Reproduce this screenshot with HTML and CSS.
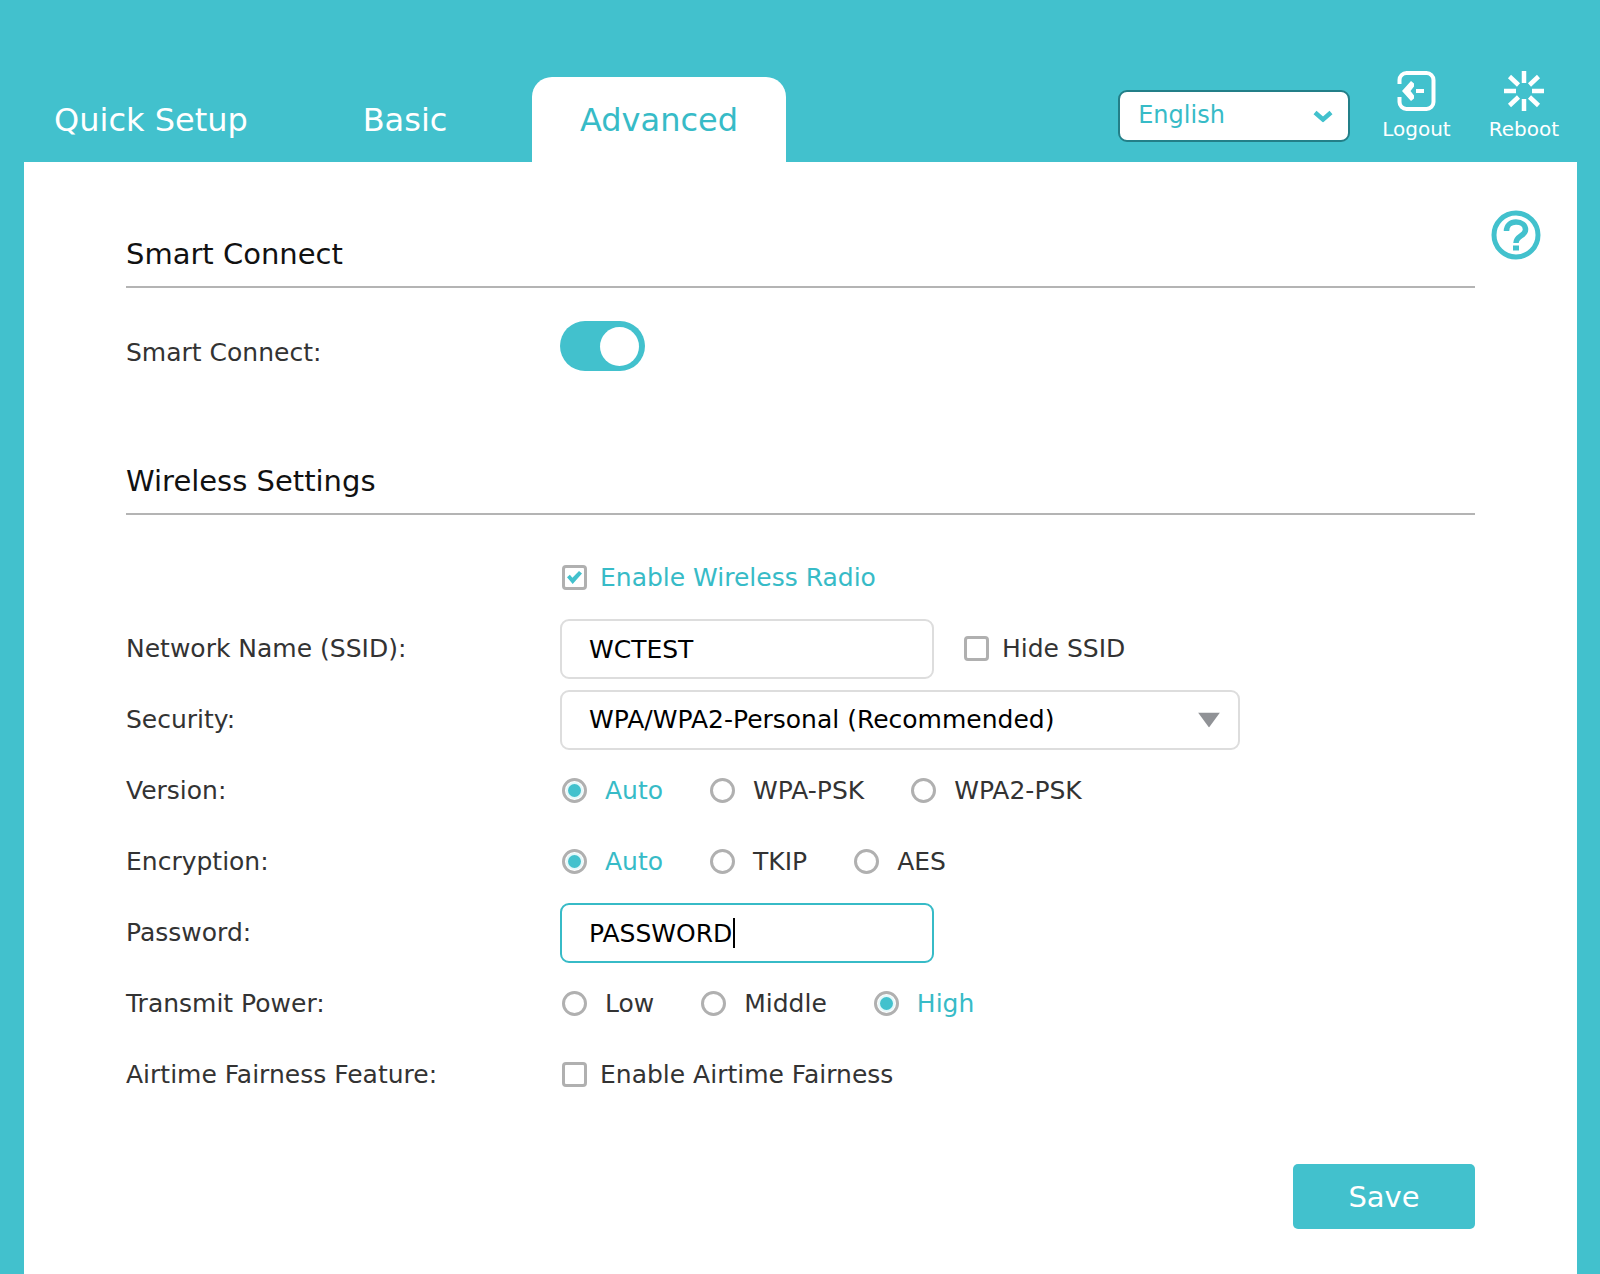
FILE: index.html
```html
<!DOCTYPE html>
<html lang="en">
<head>
  <meta charset="UTF-8" />
  <meta name="viewport" content="width=device-width, initial-scale=1.0" />
  <title>Wireless Settings</title>
  <link rel="stylesheet" href="styles.css">
</head>
<body>
  <header class="top-bar">
    <nav class="tabs">
      <a href="#quick-setup" class="tab">Quick Setup</a>
      <a href="#basic" class="tab">Basic</a>
      <a href="#advanced" class="tab active">Advanced</a>
    </nav>

    <div class="tools">
      <div class="select-wrap language">
        <select aria-label="Language">
          <option>English</option>
        </select>
        <svg class="arrow" width="20" height="13" viewBox="0 0 20 13" aria-hidden="true">
          <path d="M2 3l8 7 8-7" fill="none" stroke="currentColor" stroke-width="4.5" />
        </svg>
      </div>
      <a href="#logout" class="tool">
        <svg width="42" height="42" viewBox="0 0 42 42" aria-hidden="true">
          <g fill="none" stroke="currentColor" stroke-width="4">
            <path d="M4.500 14V10a7 7 0 0 1 7-7h20a7 7 0 0 1 7 7v22a7 7 0 0 1-7 7h-20a7 7 0 0 1-7-7v-5" />
            <path d="M21 21h8" />
          </g>
          <path d="M7 21l9-10 3 2.500v3L15.500 21l3.500 4.500v3L16 31z" fill="currentColor" />
        </svg>
        Logout
      </a>
      <a href="#reboot" class="tool">
        <svg width="42" height="42" viewBox="0 0 42 42" aria-hidden="true">
          <path d="M21 1v12M21 29v12M1 21h12M29 21h12M6.500 6.500l9 8.500M26.500 15l9-8.500M15.500 27l-9 8.500M26.500 27l9 8.500" fill="none" stroke="currentColor" stroke-width="4.500" />
        </svg>
        Reboot
      </a>
    </div>
  </header>

  <main class="panel">
    <form class="content">
      <section class="section smart">
        <h2>Smart Connect</h2>
        <div class="switch-row">
          <label class="name" for="smart">Smart Connect:</label>
          <input type="checkbox" class="switch" id="smart" role="switch" checked>
        </div>
      </section>

      <section class="section wireless">
        <h2>Wireless Settings</h2>
        <div class="row">
          <span class="name"></span>
          <label class="check"><input type="checkbox" checked><span>Enable Wireless Radio</span></label>
        </div>
        <div class="row">
          <label class="name" for="ssid">Network Name (SSID):</label>
          <input type="text" class="text-box" id="ssid" value="WCTEST">
          <label class="check hide-ssid"><input type="checkbox"><span>Hide SSID</span></label>
        </div>
        <div class="row">
          <label class="name" for="security">Security:</label>
          <div class="select-wrap security">
            <select id="security">
              <option>WPA/WPA2-Personal (Recommended)</option>
            </select>
            <svg class="arrow" width="22" height="15" viewBox="0 0 22 15" aria-hidden="true">
              <path d="M0 0h22L11 15z" fill="currentColor" />
            </svg>
          </div>
        </div>
        <div class="row" role="radiogroup" aria-label="Version">
          <span class="name">Version:</span>
          <div class="radios">
            <label class="radio"><input type="radio" name="version" checked><span>Auto</span></label>
            <label class="radio"><input type="radio" name="version"><span>WPA-PSK</span></label>
            <label class="radio"><input type="radio" name="version"><span>WPA2-PSK</span></label>
          </div>
        </div>
        <div class="row" role="radiogroup" aria-label="Encryption">
          <span class="name">Encryption:</span>
          <div class="radios">
            <label class="radio"><input type="radio" name="encryption" checked><span>Auto</span></label>
            <label class="radio"><input type="radio" name="encryption"><span>TKIP</span></label>
            <label class="radio"><input type="radio" name="encryption"><span>AES</span></label>
          </div>
        </div>
        <div class="row">
          <label class="name" for="password">Password:</label>
          <div class="caret-wrap">
            <input type="text" class="text-box" id="password" value="PASSWORD" autofocus>
            <span class="caret"></span>
          </div>
        </div>
        <div class="row" role="radiogroup" aria-label="Transmit Power">
          <span class="name">Transmit Power:</span>
          <div class="radios">
            <label class="radio"><input type="radio" name="power"><span>Low</span></label>
            <label class="radio"><input type="radio" name="power"><span>Middle</span></label>
            <label class="radio"><input type="radio" name="power" checked><span>High</span></label>
          </div>
        </div>
        <div class="row">
          <span class="name">Airtime Fairness Feature:</span>
          <label class="check"><input type="checkbox"><span>Enable Airtime Fairness</span></label>
        </div>
      </section>

      <div class="actions">
        <button type="button" class="save">Save</button>
      </div>
    </form>

    <aside class="side">
      <a href="#help" class="help" aria-label="Help">
        <svg width="50" height="50" viewBox="0 0 50 50" aria-hidden="true">
          <g fill="none" stroke="currentColor">
            <circle cx="25" cy="25" r="22" stroke-width="5" />
            <path d="M15.500 21c0-5.500 4-9 9.500-9s9.500 3 9.500 7.800c0 6.200-9.500 6-9.500 13.200" stroke-width="5.500" />
          </g>
          <path d="M22 35.500h6v5h-6z" fill="currentColor" />
        </svg>
      </a>
    </aside>
  </main>

  <script>
    // put the cursor behind the password
    const password = document.getElementById("password");
    password.focus();
    password.setSelectionRange(password.value.length, password.value.length);

    // the drawn caret is only right until the text changes
    password.addEventListener("input", () => {
      password.parentElement.classList.add("edited");
    });
  </script>
</body>
</html>
```
FILE: styles.css
```css
:root {
  --teal: #42c1cd;
  --teal-text: #37bbc7;
  --text: #333;
  --line: #b4b4b4;
  --box-line: #ddd;
}

* {
  margin: 0;
  padding: 0;
  box-sizing: border-box;
}

body {
  min-height: 100vh;
  display: flex;
  flex-direction: column;
  padding: 0 23px 0 24px;
  background: var(--teal);
  color: var(--text);
  font-family: Verdana, 'DejaVu Sans', sans-serif;
  font-size: 25px;
}

input,
select,
button {
  font: inherit;
  color: #000;
}

a {
  text-decoration: none;
}

/* Header */
.top-bar {
  height: 162px;
  display: flex;
  justify-content: space-between;
  align-items: flex-end;
}

.tabs {
  display: flex;
}

.tab {
  width: 254px;
  height: 85px;
  line-height: 86px;
  border-radius: 20px 20px 0 0;
  text-align: center;
  font-size: 32px;
  color: #fff;
}

.tab.active {
  background: #fff;
  color: var(--teal-text);
}

.tools {
  display: flex;
  align-items: flex-end;
  padding: 0 18px 20px 0;
}

.tool {
  display: flex;
  flex-direction: column;
  align-items: center;
  gap: 4px;
  margin-left: 38px;
  font-size: 20px;
  line-height: 26px;
  color: #fff;
}

.language + .tool {
  margin-left: 32px;
}

/* Selects */
.select-wrap {
  position: relative;
}

.select-wrap select {
  width: 100%;
  height: 100%;
  appearance: none;
  border: 2px solid var(--box-line);
  border-radius: 9px;
  background: #fff;
  padding: 0 56px 0 27px;
}

.select-wrap .arrow {
  position: absolute;
  right: 20px;
  top: 50%;
  transform: translateY(-50%);
  pointer-events: none;
}

.security {
  width: 680px;
  height: 60px;
  color: #909296;
}

.language {
  width: 232px;
  height: 52px;
  color: var(--teal);
}

.language select {
  border-color: #237f88;
  padding: 0 40px 2px 18px;
  font-size: 24px;
  color: var(--teal-text);
}

.language .arrow {
  right: 17px;
}

/* Panel */
.panel {
  flex: 1;
  display: flex;
  background: #fff;
  padding-left: 102px;
}

.content {
  flex: 1;
  padding-top: 67px;
}

.side {
  width: 102px;
  padding: 48px 36px 0 0;
  text-align: right;
}

.help {
  color: var(--teal);
}

.section h2 {
  height: 59px;
  border-bottom: 2px solid var(--line);
  font-size: 29px;
  font-weight: 400;
  line-height: 50px;
  color: #111;
}

.smart {
  padding-bottom: 85px;
}

.wireless h2 {
  margin-bottom: 27px;
}

.row {
  min-height: 71px;
  display: flex;
  align-items: center;
}

.switch-row {
  display: flex;
  align-items: flex-end;
  padding-top: 33px;
}

.name {
  width: 434px;
  line-height: 36px;
}

/* Form fields */
.text-box {
  width: 374px;
  height: 60px;
  border: 2px solid var(--box-line);
  border-radius: 9px;
  padding: 2px 27px 0;
  outline: none;
}

.text-box:focus {
  border-color: var(--teal-text);
}

.caret-wrap {
  position: relative;
}

.caret-wrap:not(.edited) .text-box {
  caret-color: transparent;
}

.caret {
  display: none;
  position: absolute;
  left: 173px;
  top: 15px;
  width: 2px;
  height: 30px;
  background: #000;
}

.caret-wrap:not(.edited):focus-within .caret {
  display: block;
}

.check,
.radio {
  display: flex;
  align-items: center;
  padding-left: 2px;
}

.check {
  gap: 13px;
}

.radio {
  gap: 18px;
}

.radios {
  display: flex;
  gap: 45px;
}

.hide-ssid {
  margin-left: 28px;
}

.check input,
.radio input {
  width: 25px;
  height: 25px;
  display: grid;
  place-items: center;
  appearance: none;
  border: 3px solid #b0b0b0;
  background: #fff;
}

.check input {
  border-radius: 4px;
}

.radio input {
  border-radius: 50%;
}

.radio input:checked::before {
  content: "";
  width: 13px;
  height: 13px;
  border-radius: 50%;
  background: var(--teal);
  box-shadow: 0 0 0 2px #e3f8fa;
}

.check input:checked::before {
  content: "";
  width: 15px;
  height: 13px;
  background: var(--teal);
  clip-path: polygon(0 48%, 19% 29%, 36% 52%, 80% 0, 100% 20%, 38% 100%);
}

input:checked + span {
  color: var(--teal-text);
}

.switch {
  width: 85px;
  height: 50px;
  display: flex;
  align-items: center;
  justify-content: flex-end;
  padding-right: 6px;
  appearance: none;
  border-radius: 25px;
  background: var(--teal);
}

.switch:not(:checked) {
  justify-content: flex-start;
  padding-left: 6px;
  background: var(--line);
}

.switch::before {
  content: "";
  width: 39px;
  height: 39px;
  border-radius: 50%;
  background: #fff;
}

/* Save button */
.actions {
  display: flex;
  justify-content: flex-end;
  padding: 54px 0 44px;
}

.save {
  width: 182px;
  height: 65px;
  border: none;
  border-radius: 5px;
  background: var(--teal);
  font-size: 29px;
  color: #fff;
  cursor: pointer;
}
```
